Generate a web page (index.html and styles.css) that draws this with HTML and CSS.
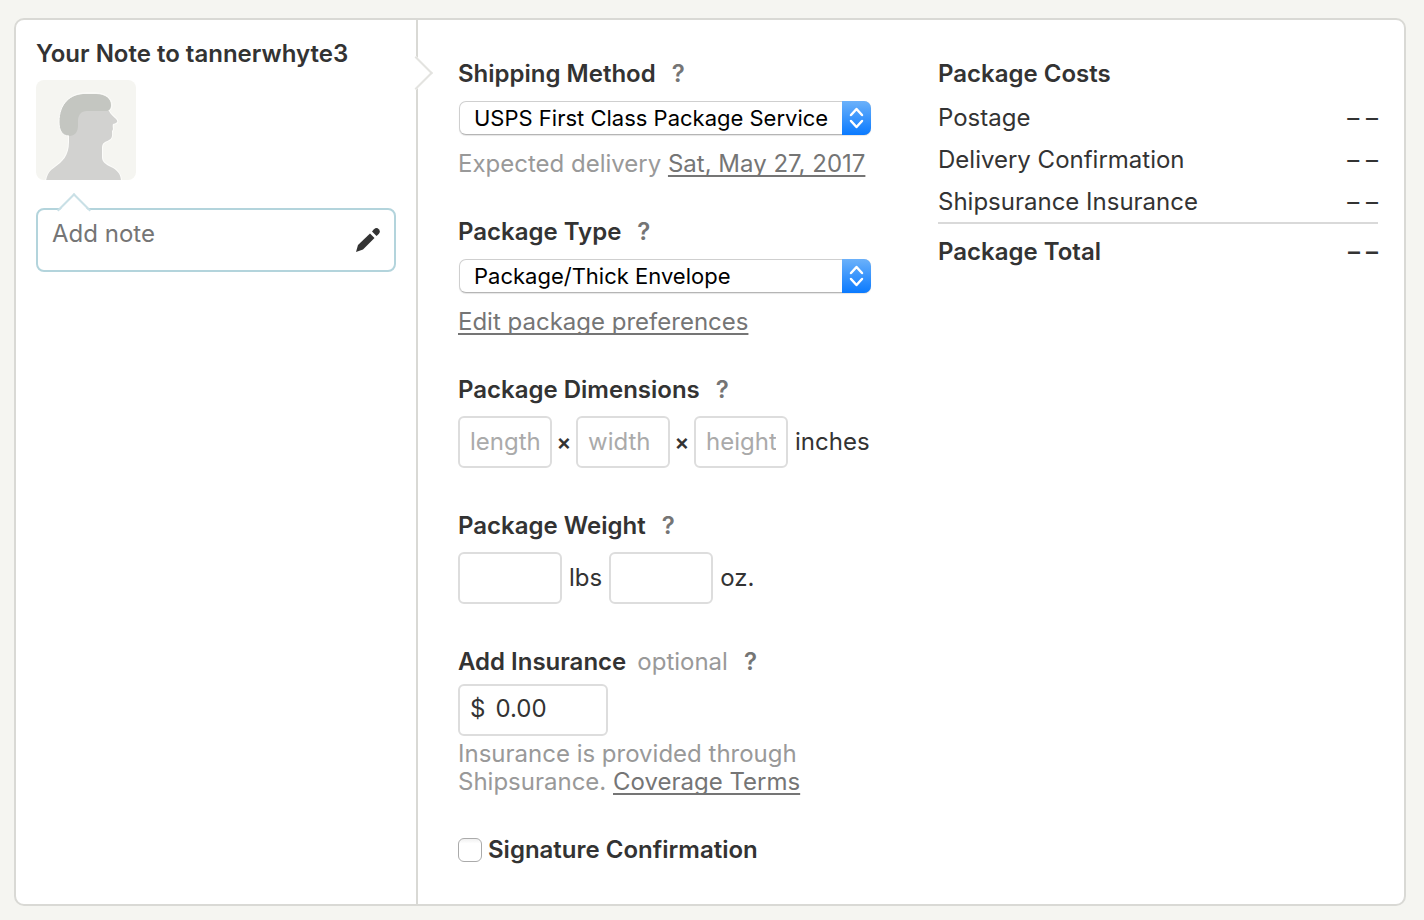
FILE: index.html
```html
<!DOCTYPE html>
<html lang="en">
<head>
    <meta charset="UTF-8">
    <meta name="viewport" content="width=device-width, initial-scale=1.0">
    <title>Shipping Label</title>
    <link rel="stylesheet" href="styles.css">
</head>
<body>
    <div class="card">
        <aside class="sidebar">
            <h2 class="title"><label for="note">Your Note to tannerwhyte3</label></h2>
            <svg class="avatar" viewBox="0 0 100 100" width="100" height="100" aria-hidden="true">
                <rect width="100" height="100" fill="#f5f5f1"/>
                <path d="M33 54V62C33 76 26 82 19 87C13 91 11 95 10 101H85C85 94 81 90 75 87C69 84 66 82 66 77V68C66 62 70 62 73 60C77 58 76 54 76 51C78 49 76 47 77 44C82 43 82 41 80 39C77 36 74 34 73 31L64 24H42Z" fill="#d2d2d0" stroke="#fcfcfa" stroke-width="2" paint-order="stroke"/>
                <path d="M33 56C26 56 23 50 23 42C23 24 34 14 50 14H60C70 14 75 19 75 25C75 29 73 31 70 31H51C45 31 42 35 42 41V45C42 52 39 56 33 56Z" fill="#c4c6c1"/>
                <path d="M33 56C26 56 23 50 23 42C23 24 34 13 50 13H60C70 13 76 19 76 25C76 28 75 30 73 31" fill="none" stroke="#fcfcfa" stroke-width="1"/>
            </svg>
            <div class="note">
                <textarea id="note" class="note-text" rows="1" placeholder="Add note"></textarea>
                <button class="note-edit" type="button" aria-label="Edit note">
                    <svg viewBox="0 0 24 24" width="24" height="24" fill="#333">
                        <path d="M0 24L2 17L14 5.500L18.500 10L7 21.500Z"/>
                        <path d="M16 3.500L18 1.300Q20.500-1 22.800 1.200Q25 3.500 22.700 6L20.500 8Z"/>
                    </svg>
                </button>
            </div>
        </aside>

        <form class="main">
            <div class="fields">
                <div class="field">
                    <div class="heading">
                        <label for="method">Shipping Method</label>
                        <button class="help" type="button">?</button>
                    </div>
                    <div class="select">
                        <select id="method">
                            <option>USPS First Class Package Services</option>
                        </select>
                        <svg class="arrows" viewBox="0 0 29 34" width="29" height="34">
                            <path d="M9 14L14.500 8L20 14M9 20L14.500 26L20 20"/>
                        </svg>
                    </div>
                    <p class="hint">Expected delivery <a href="#">Sat, May 27, 2017</a></p>
                </div>

                <div class="field">
                    <div class="heading">
                        <label for="type">Package Type</label>
                        <button class="help" type="button">?</button>
                    </div>
                    <div class="select">
                        <select id="type">
                            <option>Package/Thick Envelope</option>
                        </select>
                        <svg class="arrows" viewBox="0 0 29 34" width="29" height="34">
                            <path d="M9 14L14.500 8L20 14M9 20L14.500 26L20 20"/>
                        </svg>
                    </div>
                    <p class="hint"><a href="#">Edit package preferences</a></p>
                </div>

                <div class="field">
                    <div class="heading">
                        <label for="length">Package Dimensions</label>
                        <button class="help" type="button">?</button>
                    </div>
                    <div class="inputs">
                        <input id="length" class="box dimension" type="text" placeholder="length">
                        <span class="times">×</span>
                        <input class="box dimension" type="text" placeholder="width" aria-label="width">
                        <span class="times">×</span>
                        <input class="box dimension" type="text" placeholder="height" aria-label="height">
                        <span>inches</span>
                    </div>
                </div>

                <div class="field">
                    <div class="heading">
                        <label for="lbs">Package Weight</label>
                        <button class="help" type="button">?</button>
                    </div>
                    <div class="inputs">
                        <input id="lbs" class="box weight" type="text">
                        <label for="lbs">lbs</label>
                        <input id="oz" class="box weight" type="text">
                        <label for="oz">oz.</label>
                    </div>
                </div>

                <div class="field insurance">
                    <div class="heading">
                        <label for="insurance">Add Insurance <span class="optional">optional</span></label>
                        <button class="help" type="button">?</button>
                    </div>
                    <div class="box money">
                        <span>$</span>
                        <input id="insurance" type="text" value="0.00">
                    </div>
                    <p class="hint">Insurance is provided through<br>Shipsurance. <a href="#">Coverage Terms</a></p>
                </div>

                <div class="field signature">
                    <input id="signature" type="checkbox">
                    <label for="signature">Signature Confirmation</label>
                </div>
            </div>

            <section class="costs">
                <h2 class="title">Package Costs</h2>
                <table>
                    <tbody>
                        <tr><th scope="row">Postage</th><td>– –</td></tr>
                        <tr><th scope="row">Delivery Confirmation</th><td>– –</td></tr>
                        <tr><th scope="row">Shipsurance Insurance</th><td>– –</td></tr>
                    </tbody>
                    <tfoot>
                        <tr><th scope="row">Package Total</th><td>– –</td></tr>
                    </tfoot>
                </table>
            </section>
        </form>
    </div>
</body>
</html>
```
FILE: styles.css
```css
* {
    box-sizing: border-box;
}
body {
    margin: 0;
    padding: 18px 18px 14px 14px;
    background-color: #f5f5f1;
    color: #333;
    font-family: Inter, "Liberation Sans", sans-serif;
    font-size: 24px;
    line-height: 28px;
}
input,
textarea,
button {
    font: inherit;
    color: inherit;
}
a {
    color: #757575;
    text-decoration-thickness: 2px;
    text-underline-offset: 3px;
    text-decoration-skip-ink: none;
}
.card {
    display: flex;
    background-color: #fff;
    border: 2px solid #d9d9d5;
    border-radius: 10px;
}
.title {
    margin: 0;
    font-size: 24px;
    font-weight: 600;
}

/* note to buyer */
.sidebar {
    position: relative;
    flex: 0 0 402px;
    min-width: 0;
    padding: 20px;
    border-right: 2px solid #d9d9d5;
}
.sidebar::after {
    content: "";
    position: absolute;
    top: 41px;
    right: -12px;
    width: 22px;
    height: 22px;
    background-color: #fff;
    border: solid #e3e3e0;
    border-width: 2px 2px 0 0;
    transform: rotate(45deg);
}
.avatar {
    display: block;
    margin-top: 12px;
    border-radius: 8px;
}
.note {
    position: relative;
    display: flex;
    align-items: center;
    justify-content: space-between;
    height: 64px;
    margin-top: 28px;
    padding: 0 14px;
    border: 2px solid #b3d4dc;
    border-radius: 8px;
}
.note::before {
    content: "";
    position: absolute;
    top: -12px;
    left: 24px;
    width: 22px;
    height: 22px;
    background: linear-gradient(135deg, #fff 50%, transparent 50%);
    border: solid #c9e0e6;
    border-width: 2px 0 0 2px;
    transform: rotate(45deg);
}
.note-text {
    position: relative;
    flex: 1;
    min-width: 0;
    height: 40px;
    padding: 0;
    border: 0;
    background: none;
    resize: none;
    overflow: hidden;
}
.note-text::placeholder {
    color: #757575;
}
.note-edit {
    display: flex;
    padding: 0;
    border: 0;
    background: none;
}

/* label form */
.main {
    flex: 1;
    min-width: 0;
    display: grid;
    grid-template-columns: 1fr 1fr;
    gap: 40px;
    padding: 40px 26px 40px 40px;
}
.fields {
    display: flex;
    flex-direction: column;
    gap: 40px;
}
.heading {
    display: flex;
    gap: 16px;
    margin-bottom: 12px;
    font-weight: 600;
}
.help {
    padding: 0;
    border: 0;
    background: none;
    color: #757575;
}
.optional {
    margin-left: 5px;
    color: #999;
    font-weight: 400;
}
.hint {
    margin: 14px 0 0;
    color: #999;
}
.select {
    position: relative;
    width: 413px;
    height: 36px;
    padding: 1px 0 1px 1px;
}
.select select {
    appearance: none;
    width: 100%;
    height: 34px;
    padding: 0 41px 0 14px;
    border: 1px solid #cfcfcf;
    border-bottom-color: #b5b5b5;
    border-radius: 7px;
    background-color: #fff;
    color: #000;
    font: 22px/28px Inter, "Liberation Sans", sans-serif;
    box-shadow: 0 1px 1px rgba(0, 0, 0, 0.1);
}
.arrows {
    position: absolute;
    top: 1px;
    right: 0;
    border-radius: 0 7px 7px 0;
    background: linear-gradient(#6bb1fa, #0a7aff);
    fill: none;
    stroke: #fff;
    stroke-width: 2.5;
    stroke-linecap: round;
    stroke-linejoin: round;
    pointer-events: none;
}
.inputs {
    display: flex;
    align-items: center;
    gap: 7px;
    margin-bottom: 4px;
}
.box {
    height: 52px;
    padding: 0 10px 2px;
    border: 2px solid #ddd;
    border-radius: 6px;
    background-color: #fff;
}
.box::placeholder {
    color: #aaa;
}
.dimension {
    width: 94px;
}
.weight {
    width: 104px;
}
.times {
    display: flex;
    justify-content: center;
    width: 10px;
    font-size: 22px;
    font-weight: 600;
}
.insurance .heading {
    margin-bottom: 8px;
}
.insurance .hint {
    margin-top: 4px;
}
.money {
    display: flex;
    align-items: center;
    gap: 10px;
    width: 150px;
}
.money input {
    flex: 1;
    min-width: 0;
    padding: 0;
    border: 0;
    background: none;
}
.signature {
    display: flex;
    align-items: center;
    gap: 6px;
    font-weight: 600;
}
.signature input {
    appearance: none;
    width: 24px;
    height: 24px;
    margin: 0;
    border: 1px solid #aaa;
    border-radius: 6px;
    background: linear-gradient(#f0f0f0, #fff 20%);
}

/* costs */
.costs table {
    width: 100%;
    margin-top: 8px;
    border-spacing: 0;
}
.costs th,
.costs td {
    padding: 8px 0 6px;
    font-weight: 400;
    text-align: left;
}
.costs td {
    text-align: right;
}
.costs tfoot th,
.costs tfoot td {
    padding-top: 14px;
    border-top: 2px solid #d9d9d9;
    font-weight: 600;
}
```
